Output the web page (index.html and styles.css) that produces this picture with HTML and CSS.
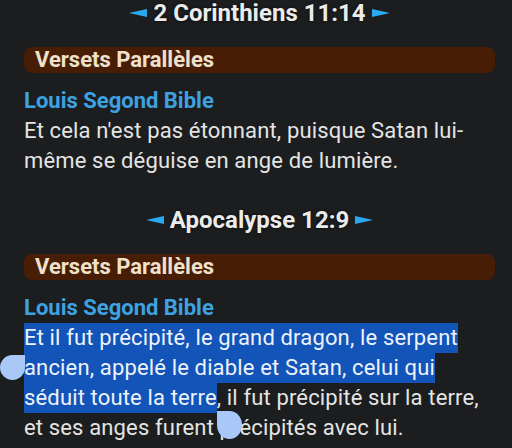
FILE: index.html
```html
<!DOCTYPE html>
<html lang="fr">
<head>
    <meta charset="UTF-8">
    <meta name="viewport" content="width=device-width, initial-scale=1.0">
    <title>Versets Parallèles</title>
    <link rel="stylesheet" href="styles.css">
</head>
<body>
<main class="page">
    <section class="passage">
        <h2 class="ref">
            <svg class="arrow" viewBox="0 0 18 8"><polygon points="0,4 18,0 18,8"/></svg>
            <span>2 Corinthiens 11:14</span>
            <svg class="arrow" viewBox="0 0 18 8"><polygon points="18,4 0,0 0,8"/></svg>
        </h2>
        <div class="bar">Versets Parallèles</div>
        <h3 class="version">Louis Segond Bible</h3>
        <p class="verse">Et cela n'est pas étonnant, puisque Satan lui-même se déguise en ange de lumière.</p>
    </section>

    <section class="passage">
        <h2 class="ref">
            <svg class="arrow" viewBox="0 0 18 8"><polygon points="0,4 18,0 18,8"/></svg>
            <span>Apocalypse 12:9</span>
            <svg class="arrow" viewBox="0 0 18 8"><polygon points="18,4 0,0 0,8"/></svg>
        </h2>
        <div class="bar">Versets Parallèles</div>
        <h3 class="version">Louis Segond Bible</h3>
        <p class="verse"><span class="sel">Et il fut précipité, le grand dragon, le serpent ancien, appelé le diable et Satan, celui qui séduit toute la terre</span>, il fut précipité sur la terre, et ses anges furent précipités avec lui.<span class="handle handle-start"></span><span class="handle handle-end"></span></p>
    </section>
</main>
</body>
</html>
```

FILE: styles.css
```css
*{
    margin: 0;
    padding: 0;
    box-sizing: border-box;
}
body{
    background-color: #1b1d1f;
    font-family: Roboto, "Noto Sans", sans-serif;
    color: #e4e4e4;
    overflow: hidden;
}
.page{
    padding: 0 17px 0 24px;
}
.passage{
    margin-bottom: 31px;
}
.ref{
    display: flex;
    justify-content: center;
    align-items: center;
    font-size: 24px;
    font-weight: bold;
    line-height: 26px;
    color: #ebebeb;
    text-shadow: 0 0 3px rgba(0, 0, 0, 0.8);
    margin-bottom: 21px;
}
.arrow{
    width: 18px;
    height: 8px;
    margin: 0 6px;
    fill: #2ba9f0;
}
.bar{
    background-color: #481d06;
    border-radius: 8px;
    height: 26px;
    line-height: 26px;
    padding-left: 11px;
    font-size: 22px;
    font-weight: bold;
    color: #efe1cb;
    margin-bottom: 13px;
}
.version{
    font-size: 22px;
    font-weight: bold;
    line-height: 30px;
    color: #3ea2e2;
}
.verse{
    position: relative;
    font-size: 22px;
    line-height: 30px;
    letter-spacing: 0.15px;
    margin-right: 8px;
}
.sel{
    background-color: #1254b8;
    color: #eef2fa;
    padding: 2px 0 3px;
}
.handle{
    position: absolute;
    width: 25px;
    height: 25px;
    background-color: #a9c8f7;
}
.handle-start{
    left: -24px;
    top: 32px;
    border-radius: 50% 0 50% 50%;
}
.handle-end{
    left: 193px;
    top: 88px;
    height: 28px;
    border-radius: 0 50% 50% 50%;
}
```
